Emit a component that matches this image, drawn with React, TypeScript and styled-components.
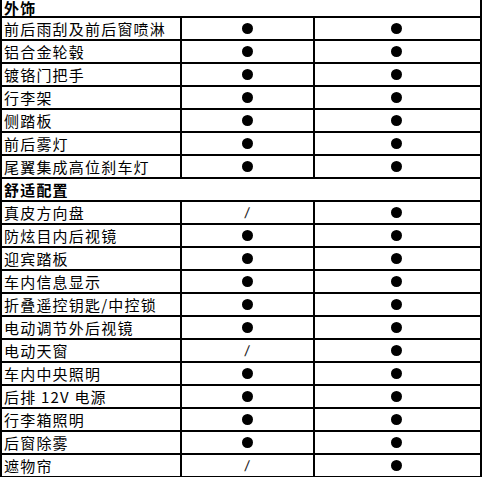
import styled, { createGlobalStyle } from "styled-components";

type Mark = "dot" | "none";

type Item = { name: string; base: Mark; top: Mark };

type Section = { title: string; items: Item[] };

const sections: Section[] = [
  {
    title: "外饰",
    items: [
      { name: "前后雨刮及前后窗喷淋", base: "dot", top: "dot" },
      { name: "铝合金轮毂", base: "dot", top: "dot" },
      { name: "镀铬门把手", base: "dot", top: "dot" },
      { name: "行李架", base: "dot", top: "dot" },
      { name: "侧踏板", base: "dot", top: "dot" },
      { name: "前后雾灯", base: "dot", top: "dot" },
      { name: "尾翼集成高位刹车灯", base: "dot", top: "dot" },
    ],
  },
  {
    title: "舒适配置",
    items: [
      { name: "真皮方向盘", base: "none", top: "dot" },
      { name: "防炫目内后视镜", base: "dot", top: "dot" },
      { name: "迎宾踏板", base: "dot", top: "dot" },
      { name: "车内信息显示", base: "dot", top: "dot" },
      { name: "折叠遥控钥匙/中控锁", base: "dot", top: "dot" },
      { name: "电动调节外后视镜", base: "dot", top: "dot" },
      { name: "电动天窗", base: "none", top: "dot" },
      { name: "车内中央照明", base: "dot", top: "dot" },
      { name: "后排 12V 电源", base: "dot", top: "dot" },
      { name: "行李箱照明", base: "dot", top: "dot" },
      { name: "后窗除雾", base: "dot", top: "dot" },
      { name: "遮物帘", base: "none", top: "dot" },
    ],
  },
];

const MarkCell = ({ mark, last }: { mark: Mark; last?: boolean }) => (
  <ValueCell $last={last}>{mark === "dot" ? <Dot /> : <Slash>/</Slash>}</ValueCell>
);

const App = () => {
  return (
    <>
      <GlobalStyle />
      <Sheet>
        {sections.map((section, i) => (
          <div key={section.title}>
            <SectionRow $first={i === 0}>{section.title}</SectionRow>
            {section.items.map((item) => (
              <ItemRow key={item.name}>
                <NameCell>{item.name}</NameCell>
                <MarkCell mark={item.base} />
                <MarkCell mark={item.top} last />
              </ItemRow>
            ))}
          </div>
        ))}
      </Sheet>
    </>
  );
};
export default App;

const GlobalStyle = createGlobalStyle`
  html, body {
    margin: 0;
    padding: 0;
    background: #ffffff;
    overflow: hidden;
  }
  * {
    box-sizing: border-box;
  }
`;

const Sheet = styled.div`
  width: 482px;
  border-left: 2px solid #000;
  border-right: 2px solid #000;
  font-family: "Noto Sans CJK SC", "Noto Sans", sans-serif;
  color: #000;
`;

const SectionRow = styled.div<{ $first?: boolean }>`
  display: flex;
  align-items: ${(p) => (p.$first ? "flex-end" : "center")};
  height: ${(p) => (p.$first ? "18px" : "23px")};
  border-bottom: 2px solid #000;
  padding-left: 2px;
  font-size: 15px;
  font-weight: 700;
  line-height: 16px;
  letter-spacing: 1.2px;
`;

const ItemRow = styled.div`
  display: grid;
  grid-template-columns: 180px 133px 165px;
  height: 23px;
  border-bottom: 2px solid #000;
`;

const NameCell = styled.div`
  border-right: 2px solid #000;
  padding-left: 2px;
  font-size: 15px;
  line-height: 21px;
  letter-spacing: 1.2px;
  white-space: nowrap;
  overflow: hidden;
`;

const ValueCell = styled.div<{ $last?: boolean }>`
  display: flex;
  align-items: center;
  justify-content: center;
  border-right: ${(p) => (p.$last ? "none" : "2px solid #000")};
  padding-right: ${(p) => (p.$last ? "2px" : "0")};
`;

const Dot = styled.span`
  width: 11px;
  height: 11px;
  border-radius: 50%;
  background: #000;
`;

const Slash = styled.span`
  font-family: "Liberation Sans", sans-serif;
  font-size: 15px;
  line-height: 1;
  color: #222;
  transform: skewX(-8deg);
`;
